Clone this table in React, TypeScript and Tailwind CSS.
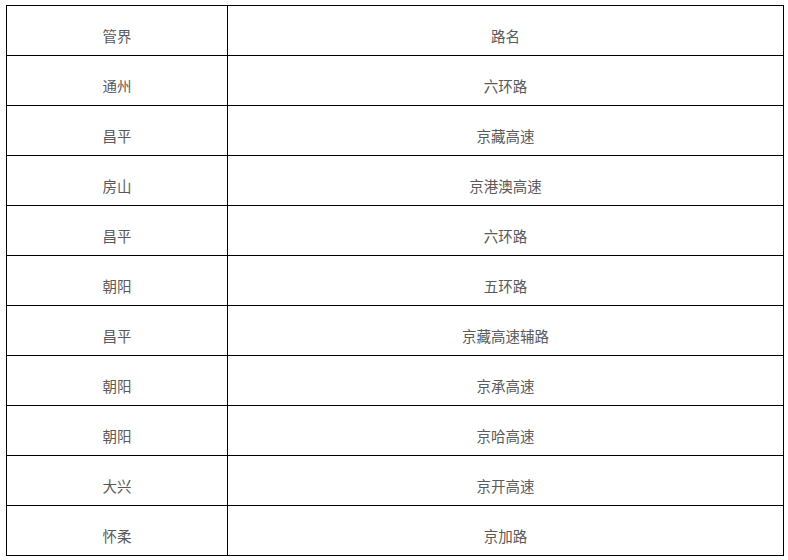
import React from 'react';

const rows: [string, string][] = [
  ['管界', '路名'],
  ['通州', '六环路'],
  ['昌平', '京藏高速'],
  ['房山', '京港澳高速'],
  ['昌平', '六环路'],
  ['朝阳', '五环路'],
  ['昌平', '京藏高速辅路'],
  ['朝阳', '京承高速'],
  ['朝阳', '京哈高速'],
  ['大兴', '京开高速'],
  ['怀柔', '京加路'],
];

export default function App() {
  return (
    <div className="min-h-[560px] bg-white pl-[6px] pt-[5px] font-['Liberation_Sans','Noto_Sans_CJK_SC',sans-serif]">
      <table className="w-[778px] border-collapse text-[14.5px] text-[#5a5a5a]">
        <tbody>
          {rows.map(([area, road], i) => (
            <tr key={i} className="h-[50px]">
              <td className="w-[221px] border border-black px-2 pt-[21px] pb-[7px] text-center align-top leading-5">
                {area}
              </td>
              <td className="border border-black px-2 pt-[21px] pb-[7px] text-center align-top leading-5">
                {road}
              </td>
            </tr>
          ))}
        </tbody>
      </table>
    </div>
  );
}
